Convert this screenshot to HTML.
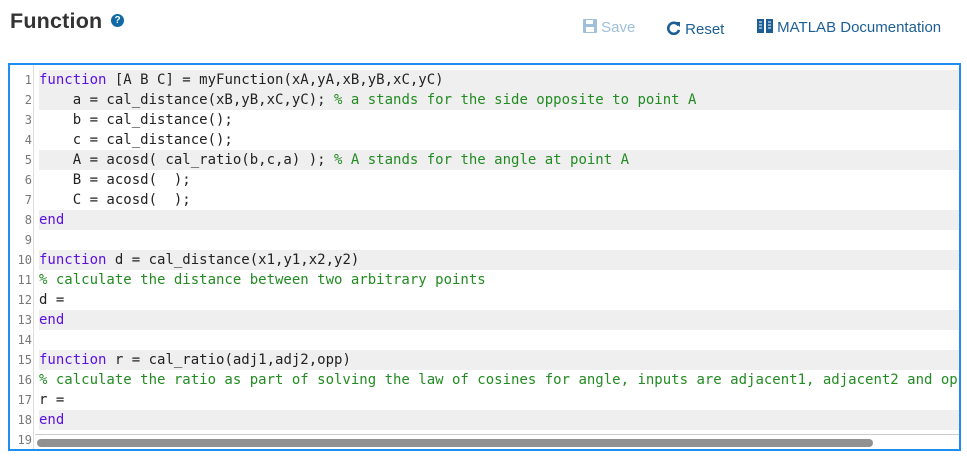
<!DOCTYPE html>
<html><head><meta charset="utf-8"><style>
*{margin:0;padding:0;box-sizing:border-box}
body{width:967px;height:468px;background:#fff;font-family:"Liberation Sans",sans-serif;position:relative;overflow:hidden}
.title{position:absolute;left:10px;top:9px;font-size:21.5px;font-weight:bold;color:#333;letter-spacing:0.2px}
.help{position:absolute;left:110px;top:14px;width:13px;height:13px;border-radius:50%;background:#0f6aa5;color:#fff;font-size:10px;font-weight:bold;text-align:center;line-height:13px}
.btn{position:absolute;top:19px;font-size:15px}
.ed{position:absolute;left:8px;top:63px;width:953px;height:388px;border:2px solid #1e8ef0;overflow:hidden}
.gut{position:absolute;left:0;top:0;width:24px;height:100%;background:#fff;border-right:1px solid #ddd}
.row{position:absolute;left:0;height:20px;width:100%;font-family:"DejaVu Sans Mono",monospace;font-size:14px;line-height:21px;white-space:pre;color:#222}
.row .n{position:absolute;left:0;width:22px;text-align:right;color:#777;font-size:12px}
.row .c{position:absolute;left:29px;right:0;height:20px;padding-left:0}
.g .c{background:#efefef}
.k{color:#5b12e0}
.cm{color:#228b22}
.sb{position:absolute;left:27px;top:374px;width:836px;height:8px;border-radius:4px;background:#919191}
.sbt{position:absolute;left:25px;top:369px;right:0;border-top:1px solid #ccc}
</style></head><body>
<div class="title">Function</div><div class="help" style="left:111px">?</div>
<div class="btn" style="left:583px;color:#9fc0da"><svg width="14" height="14" viewBox="0 0 14 14" style="vertical-align:-1px"><rect x="0" y="0" width="14" height="14" rx="1" fill="#9fc0da"/><rect x="3" y="1" width="7" height="4" fill="#fff"/><rect x="3" y="8" width="8" height="5" fill="#fff"/></svg>&nbsp;Save</div>
<div class="btn" style="left:667px;top:21px;color:#1d5f94"><svg width="14" height="14" viewBox="0 0 14 14" style="vertical-align:-1px"><path d="M11.5 4.5A5.5 5.5 0 1 0 12 9" fill="none" stroke="#1d5f94" stroke-width="2.6"/><path d="M8 1l5 0l0 5z" fill="#1d5f94"/></svg>&nbsp;Reset</div>
<div class="btn" style="left:757px;color:#1d5f94"><svg width="16" height="14" viewBox="0 0 16 14" style="vertical-align:-1px"><rect x="0" y="0" width="7" height="14" fill="#1d5f94"/><rect x="9" y="0" width="7" height="14" fill="#1d5f94"/><path d="M2 3h3M2 6h3M2 9h3M11 3h3M11 6h3M11 9h3" stroke="#fff" stroke-width="1"/></svg>&nbsp;MATLAB Documentation</div>
<div class="ed">
<div class="gut"></div>
<div class="row g" style="top:5px"><span class="n">1</span><span class="c"><span class="k">function</span> [A B C] = myFunction(xA,yA,xB,yB,xC,yC)</span></div>
<div class="row g" style="top:25px"><span class="n">2</span><span class="c">    a = cal_distance(xB,yB,xC,yC); <span class="cm">% a stands for the side opposite to point A</span></span></div>
<div class="row" style="top:45px"><span class="n">3</span><span class="c">    b = cal_distance();</span></div>
<div class="row" style="top:65px"><span class="n">4</span><span class="c">    c = cal_distance();</span></div>
<div class="row g" style="top:85px"><span class="n">5</span><span class="c">    A = acosd( cal_ratio(b,c,a) ); <span class="cm">% A stands for the angle at point A</span></span></div>
<div class="row" style="top:105px"><span class="n">6</span><span class="c">    B = acosd(  );</span></div>
<div class="row" style="top:125px"><span class="n">7</span><span class="c">    C = acosd(  );</span></div>
<div class="row g" style="top:145px"><span class="n">8</span><span class="c"><span class="k">end</span></span></div>
<div class="row" style="top:165px"><span class="n">9</span><span class="c"></span></div>
<div class="row g" style="top:185px"><span class="n">10</span><span class="c"><span class="k">function</span> d = cal_distance(x1,y1,x2,y2)</span></div>
<div class="row" style="top:205px"><span class="n">11</span><span class="c"><span class="cm">% calculate the distance between two arbitrary points</span></span></div>
<div class="row" style="top:225px"><span class="n">12</span><span class="c">d =</span></div>
<div class="row g" style="top:245px"><span class="n">13</span><span class="c"><span class="k">end</span></span></div>
<div class="row" style="top:265px"><span class="n">14</span><span class="c"></span></div>
<div class="row g" style="top:285px"><span class="n">15</span><span class="c"><span class="k">function</span> r = cal_ratio(adj1,adj2,opp)</span></div>
<div class="row" style="top:305px"><span class="n">16</span><span class="c"><span class="cm">% calculate the ratio as part of solving the law of cosines for angle, inputs are adjacent1, adjacent2 and opposite</span></span></div>
<div class="row" style="top:325px"><span class="n">17</span><span class="c">r =</span></div>
<div class="row g" style="top:345px"><span class="n">18</span><span class="c"><span class="k">end</span></span></div>
<div class="row" style="top:365px"><span class="n">19</span><span class="c"></span></div>
<div class="sbt"></div>
<div class="sb"></div>
</div>
</body></html>
